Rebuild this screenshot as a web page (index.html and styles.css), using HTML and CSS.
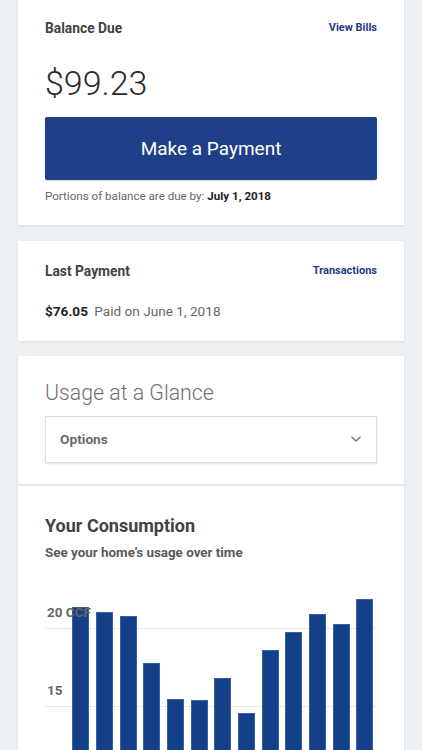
FILE: index.html
```html
<!DOCTYPE html>
<html lang="en">
<head>
<meta charset="utf-8">
<title>Account</title>
<link rel="stylesheet" href="styles.css">
</head>
<body>
<main class="page">
  <section class="card balance">
    <div class="card-head">
      <h2 class="card-title">Balance Due</h2>
      <a class="card-link" href="#">View Bills</a>
    </div>
    <div class="amount">$99.23</div>
    <button class="pay-btn" type="button">Make a Payment</button>
    <p class="due-note">Portions of balance are due by: <strong>July 1, 2018</strong></p>
  </section>

  <section class="card last-payment">
    <div class="card-head">
      <h2 class="card-title">Last Payment</h2>
      <a class="card-link" href="#">Transactions</a>
    </div>
    <p class="paid-row"><strong>$76.05</strong> Paid on June 1, 2018</p>
  </section>

  <section class="card usage">
    <div class="usage-top">
      <h2 class="usage-title">Usage at a Glance</h2>
      <div class="select-box">
        <span>Options</span>
        <svg class="chev" width="12" height="8" viewBox="0 0 12 8"><path d="M1.5 1.8 L6 6 L10.5 1.8" fill="none" stroke="#777" stroke-width="1.5"/></svg>
      </div>
    </div>
    <div class="consumption">
      <h3 class="cons-title">Your Consumption</h3>
      <p class="cons-sub">See your home’s usage over time</p>
      <div class="chart">
        <div class="grid g20"></div>
        <div class="grid g15"></div>
        <div class="bars">
          <div class="bar" style="height:176.7px"></div>
          <div class="bar" style="height:171.7px"></div>
          <div class="bar" style="height:167.4px"></div>
          <div class="bar" style="height:120.1px"></div>
          <div class="bar" style="height:84.1px"></div>
          <div class="bar" style="height:83.4px"></div>
          <div class="bar" style="height:105.7px"></div>
          <div class="bar" style="height:70.7px"></div>
          <div class="bar" style="height:133.7px"></div>
          <div class="bar" style="height:151.7px"></div>
          <div class="bar" style="height:169.7px"></div>
          <div class="bar" style="height:159.7px"></div>
          <div class="bar" style="height:184.4px"></div>
        </div>
        <span class="axis-label l20">20 CCF</span>
        <span class="axis-label l15">15</span>
      </div>
    </div>
  </section>
</main>
</body>
</html>
```

FILE: styles.css
```css
* { box-sizing: border-box; }
html, body { margin: 0; padding: 0; }
body {
  background: #edf0f3;
  font-family: Roboto, "Liberation Sans", Arial, sans-serif;
  color: #444;
}
.page {
  padding: 0 18px;
  display: flex;
  flex-direction: column;
  gap: 15.5px;
}
.card {
  background: #fff;
  box-shadow: 0 1px 2px rgba(0, 0, 0, 0.09);
  padding: 0 27px;
}
.card-head {
  display: flex;
  justify-content: space-between;
  align-items: center;
  height: 20px;
}
.card-title {
  margin: 0;
  font-size: 13.8px;
  font-weight: 700;
  color: #424242;
  line-height: 20px;
}
.card-link {
  font-size: 11px;
  font-weight: 700;
  color: #1f3c86;
  text-decoration: none;
  line-height: 20px;
}
.balance { padding-top: 18px; padding-bottom: 21px; }
.amount {
  margin-top: 25px;
  font-size: 34px;
  font-weight: 300;
  line-height: 40px;
  color: #2b2b2b;
}
.pay-btn {
  display: block;
  width: 100%;
  height: 63px;
  margin-top: 14px;
  border: 0;
  border-radius: 2px;
  background: #1f3f88;
  color: #fff;
  font-family: inherit;
  font-size: 19px;
  font-weight: 400;
  box-shadow: 0 1px 2px rgba(0, 0, 0, 0.15);
}
.due-note {
  margin: 8px 0 0;
  font-size: 11.6px;
  line-height: 16px;
  color: #666;
}
.due-note strong { color: #222; font-weight: 700; }

.last-payment { padding-top: 20.5px; padding-bottom: 20px; }
.paid-row {
  margin: 19.5px 0 0;
  font-size: 13.6px;
  line-height: 20px;
  color: #666;
}
.paid-row strong { color: #222; font-weight: 700; margin-right: 3px; }

.usage { padding: 0; }
.usage-top {
  padding: 23px 27px 21px;
  border-bottom: 2px solid #e8e9eb;
}
.usage-title {
  margin: 0;
  font-size: 21.3px;
  font-weight: 300;
  line-height: 28px;
  color: #6f6f6f;
}
.select-box {
  margin-top: 8.5px;
  height: 47px;
  border: 1px solid #dcdcdc;
  box-shadow: 0 1px 2px rgba(0, 0, 0, 0.1);
  display: flex;
  align-items: center;
  justify-content: space-between;
  padding: 0 14px 0 14px;
  font-size: 13.7px;
  font-weight: 700;
  color: #6a6a6a;
}
.chev { display: block; }

.consumption { padding: 28px 27px 0; }
.cons-title {
  margin: 0;
  font-size: 18px;
  font-weight: 700;
  line-height: 24px;
  color: #424242;
}
.cons-sub {
  margin: 6.7px 0 0;
  font-size: 13.4px;
  font-weight: 700;
  line-height: 18px;
  color: #5a5a5a;
}
.chart {
  position: relative;
  margin-top: 28px;
  height: 193.4px;
}
.grid {
  position: absolute;
  left: 0;
  right: 0;
  height: 1px;
  background: #e6e7e9;
}
.g20 { top: 38.2px; }
.g15 { top: 115.5px; }
.bars {
  position: relative;
  display: flex;
  align-items: flex-end;
  gap: 6.67px;
  height: 100%;
  margin-left: 27.3px;
}
.bar {
  width: 17px;
  background: #14408a;
  border: 1px solid #3b5e9e;
  border-bottom: 0;
}
.axis-label {
  position: absolute;
  left: 2px;
  font-size: 13.5px;
  font-weight: 700;
  line-height: 16px;
  color: #666;
}
.l20 { top: 14px; }
.l15 { top: 92px; }
```
